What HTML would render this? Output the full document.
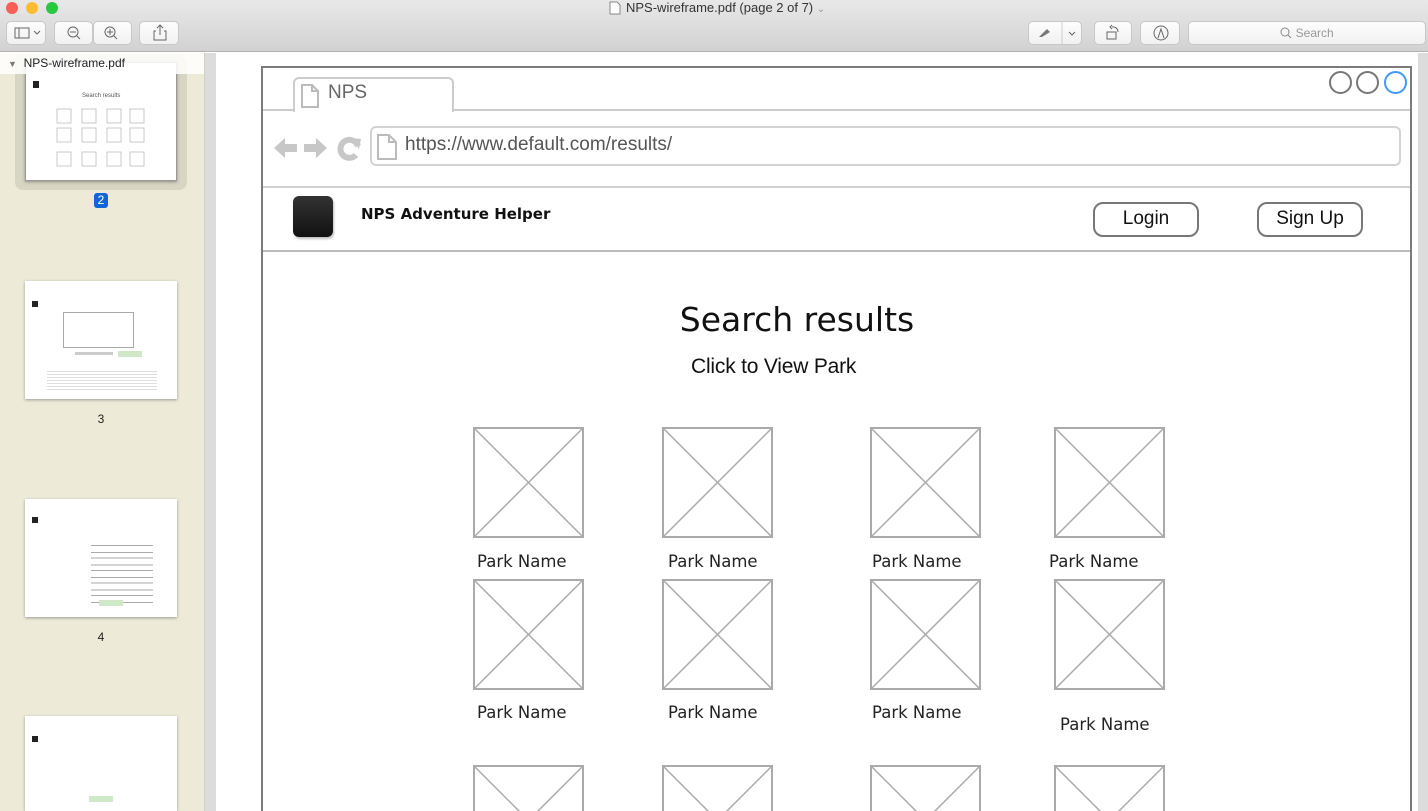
<!DOCTYPE html>
<html><head><meta charset="utf-8"><style>
*{margin:0;padding:0;box-sizing:border-box}
html,body{width:1428px;height:811px;overflow:hidden}
body{position:relative;font-family:"Liberation Sans",sans-serif;background:#fff}
#w{position:absolute;left:0;top:0;width:1428px;height:811px;overflow:hidden}
.a{position:absolute}
.btn{position:absolute;top:21px;height:24px;border:1px solid #c8c8c8;border-radius:5px;background:linear-gradient(#fdfdfd,#f1f1f1)}
.img{position:absolute;width:111px;height:111px}
.img.b{height:46px}
.lbl{position:absolute;font-family:"DejaVu Sans",sans-serif;font-size:16.5px;color:#222}
.th{position:absolute;left:25px;width:152px;background:#fff;box-shadow:0 1px 3px rgba(0,0,0,.35);overflow:hidden}
.num{position:absolute;font-size:12px;color:#222;width:20px;text-align:center;left:91px}
</style></head><body><div id="w">
<div class="a" style="left:0;top:0;width:1428px;height:52px;background:linear-gradient(#e9e8e9,#d3d2d3);border-bottom:1px solid #b3b3b3"></div>
<div class="a" style="left:6px;top:2px;width:12px;height:12px;border-radius:50%;background:#fc5f57"></div>
<div class="a" style="left:26px;top:2px;width:12px;height:12px;border-radius:50%;background:#fdbc2e"></div>
<div class="a" style="left:46px;top:2px;width:12px;height:12px;border-radius:50%;background:#28c840"></div>
<svg class="a" style="left:609px;top:1px" width="12" height="14"><path d="M1 1h7l3 3v9H1z" fill="#fff" stroke="#888"/></svg>
<div class="a" style="left:626px;top:0;font-size:13px;color:#333;line-height:15px">NPS-wireframe.pdf (page 2 of 7) <span style="color:#999;font-size:10px">⌄</span></div>
<div class="btn" style="left:6px;width:40px"><svg width="40" height="22"><rect x="8" y="6" width="14" height="10" fill="none" stroke="#666"/><line x1="12" y1="6" x2="12" y2="16" stroke="#666"/><path d="M27 9l3 3 3-3" fill="none" stroke="#666"/></svg></div>
<div class="btn" style="left:54px;width:39px"><svg width="39" height="22"><circle cx="18" cy="10" r="5" fill="none" stroke="#666"/><line x1="15" y1="10" x2="21" y2="10" stroke="#666"/><line x1="22" y1="14" x2="25" y2="17" stroke="#666"/></svg></div>
<div class="btn" style="left:93px;width:39px"><svg width="39" height="22"><circle cx="16" cy="10" r="5" fill="none" stroke="#666"/><line x1="13" y1="10" x2="19" y2="10" stroke="#666"/><line x1="16" y1="7" x2="16" y2="13" stroke="#666"/><line x1="20" y1="14" x2="23" y2="17" stroke="#666"/></svg></div>
<div class="btn" style="left:139px;width:40px"><svg width="40" height="22"><path d="M16 9h-2v9h12v-9h-2M20 13V3M17 6l3-3 3 3" fill="none" stroke="#666"/></svg></div>
<div class="btn" style="left:1028px;width:54px"><svg width="54" height="22"><path d="M8 17h14M10 15l8-8 3 3-8 5z" fill="#777"/><line x1="33" y1="0" x2="33" y2="22" stroke="#ccc"/><path d="M40 10l3 3 3-3" fill="none" stroke="#666"/></svg></div>
<div class="btn" style="left:1094px;width:38px"><svg width="38" height="22"><rect x="12" y="10" width="9" height="7" fill="none" stroke="#666"/><path d="M17 5a5 5 0 0 1 6 5M17 3l-2 2 2 2" fill="none" stroke="#666"/></svg></div>
<div class="btn" style="left:1140px;width:40px"><svg width="40" height="22"><circle cx="20" cy="11" r="7" fill="none" stroke="#666"/><path d="M17 16l3-9 3 9" fill="none" stroke="#666"/></svg></div>
<div class="btn" style="left:1188px;width:238px;color:#999;font-size:12px;text-align:center;line-height:22px"><svg width="12" height="12" style="vertical-align:-2px"><circle cx="5" cy="5" r="4" fill="none" stroke="#888"/><line x1="8" y1="8" x2="11" y2="11" stroke="#888"/></svg> Search</div>
<div class="a" style="left:0;top:53px;width:204px;height:758px;background:#edebd8"></div>
<div class="a" style="left:204px;top:53px;width:12px;height:758px;background:#dcdcdc;border-left:1px solid #cfcfcf"></div>
<div class="a" style="left:15px;top:55px;width:172px;height:135px;background:#d7d5c3;border-radius:8px"></div>
<div class="th" style="top:62px;height:119px;border:1px solid #999"><div class="a" style="left:7px;top:18px;width:6px;height:7px;background:#222"></div><div class="a" style="left:56px;top:30px;font-size:6px;color:#555">Search results</div>
<svg class="a" style="left:30px;top:45px" width="120" height="70"><g fill="none" stroke="#bbb" stroke-width=".8"><rect x="1" y="1" width="14" height="14"/><rect x="26" y="1" width="14" height="14"/><rect x="51" y="1" width="14" height="14"/><rect x="74" y="1" width="14" height="14"/><rect x="1" y="20" width="14" height="14"/><rect x="26" y="20" width="14" height="14"/><rect x="51" y="20" width="14" height="14"/><rect x="74" y="20" width="14" height="14"/><rect x="1" y="44" width="14" height="14"/><rect x="26" y="44" width="14" height="14"/><rect x="51" y="44" width="14" height="14"/><rect x="74" y="44" width="14" height="14"/></g></svg></div>
<div class="a" style="left:0;top:53px;width:204px;height:21px;background:rgba(255,255,255,.85);font-size:12px;color:#222;line-height:21px;padding-left:8px"><span style="color:#777;font-size:9px">▼</span>&nbsp;&nbsp;NPS-wireframe.pdf</div>
<div class="a" style="left:94px;top:193px;width:14px;height:15px;background:#1066d8;border-radius:3px;color:#fff;font-size:12px;text-align:center;line-height:15px">2</div>
<div class="th" style="top:281px;height:118px"><div class="a" style="left:7px;top:20px;width:6px;height:6px;background:#222"></div><div class="a" style="left:38px;top:31px;width:71px;height:36px;border:1px solid #aaa"></div><div class="a" style="left:93px;top:70px;width:24px;height:6px;background:#cfe9c8"></div><div class="a" style="left:50px;top:71px;width:38px;height:3px;background:#ccc"></div><div class="a" style="left:22px;top:90px;width:110px;height:20px;background:repeating-linear-gradient(#ddd 0 1px,#fff 1px 3px)"></div></div>
<div class="num" style="top:412px">3</div>
<div class="th" style="top:499px;height:118px"><div class="a" style="left:7px;top:18px;width:6px;height:6px;background:#222"></div><div class="a" style="left:66px;top:46px;width:62px;height:60px;background:repeating-linear-gradient(#aaa 0 1px,#fff 1px 7px,#aaa 7px 8px,#fff 8px 12.5px)"></div><div class="a" style="left:74px;top:101px;width:24px;height:6px;background:#cfe9c8"></div></div>
<div class="num" style="top:630px">4</div>
<div class="th" style="top:716px;height:95px"><div class="a" style="left:7px;top:20px;width:6px;height:6px;background:#222"></div><div class="a" style="left:64px;top:80px;width:24px;height:6px;background:#cfe9c8"></div></div>
<div class="a" style="left:1418px;top:53px;width:10px;height:758px;background:#dcdcdc"></div>
<div class="a" style="left:261px;top:66px;width:1151px;height:745px;border:2px solid #7b7b7b;border-bottom:none"></div>
<div class="a" style="left:293px;top:77px;width:161px;height:35px;border:2px solid #ccc;border-bottom:none;border-radius:6px 6px 0 0;background:#fff"></div>
<svg class="a" style="left:300px;top:83px" width="20" height="26"><path d="M2 2h10l6 6v16H2z M12 2v6h6" fill="none" stroke="#bbb" stroke-width="2"/></svg>
<div class="a" style="left:328px;top:82px;font-size:19px;color:#666">NPS</div>
<div class="a" style="left:263px;top:109px;width:31px;height:2px;background:#ccc"></div>
<div class="a" style="left:453px;top:109px;width:957px;height:2px;background:#ccc"></div>
<div class="a" style="left:1329px;top:71px;width:23px;height:23px;border:2px solid #777;border-radius:50%"></div>
<div class="a" style="left:1356px;top:71px;width:23px;height:23px;border:2px solid #777;border-radius:50%"></div>
<div class="a" style="left:1384px;top:71px;width:23px;height:23px;border:2px solid #3d9bff;border-radius:50%"></div>
<svg class="a" style="left:272px;top:134px" width="95" height="28"><path d="M2 14l11-10v6h12v8H13v6z" fill="#c7c7c7"/><path d="M32 10h12V4l11 10-11 10v-6H32z" fill="#c7c7c7"/><path d="M86 12a9 9 0 1 0-2 9" fill="none" stroke="#c7c7c7" stroke-width="6"/><path d="M79 4l10 1-2 10z" fill="#c7c7c7"/></svg>
<div class="a" style="left:370px;top:126px;width:1031px;height:40px;border:2px solid #d3d3d3;border-radius:6px"></div>
<svg class="a" style="left:376px;top:133px" width="22" height="28"><path d="M2 2h11l7 7v17H2z M13 2v7h7" fill="none" stroke="#bbb" stroke-width="2"/></svg>
<div class="a" style="left:405px;top:134px;font-size:19px;color:#555">https://www.default.com/results/</div>
<div class="a" style="left:263px;top:186px;width:1147px;height:2px;background:#d0d0d0"></div>
<div class="a" style="left:293px;top:196px;width:40px;height:41px;border-radius:6px;background:linear-gradient(#333,#111);box-shadow:1px 2px 2px rgba(0,0,0,.25)"></div>
<div class="a" style="left:361px;top:205px;font-family:'DejaVu Sans',sans-serif;font-weight:bold;font-size:15px;color:#111">NPS Adventure Helper</div>
<div class="a" style="left:1093px;top:202px;width:106px;height:35px;border:2px solid #777;border-radius:10px;text-align:center;font-size:19px;line-height:30px;color:#111">Login</div>
<div class="a" style="left:1257px;top:202px;width:106px;height:35px;border:2px solid #777;border-radius:10px;text-align:center;font-size:19px;line-height:30px;color:#111">Sign Up</div>
<div class="a" style="left:263px;top:250px;width:1147px;height:2px;background:#bbb"></div>
<div class="a" style="left:597px;top:300px;width:400px;text-align:center;font-family:'DejaVu Sans',sans-serif;font-size:33px;color:#111">Search results</div>
<div class="a" style="left:691px;top:355px;font-size:21px;color:#111;letter-spacing:-0.2px">Click to View Park</div>
<svg width="0" height="0" style="position:absolute"><defs><g id="x"><rect x="1" y="1" width="109" height="109" fill="#fff" stroke="#aaa" stroke-width="2"/><path d="M1 1L110 110M110 1L1 110" stroke="#aaa" stroke-width="1.5"/></g></defs></svg>
<svg class="img" style="left:473px;top:427px"><use href="#x"/></svg>
<svg class="img" style="left:662px;top:427px"><use href="#x"/></svg>
<svg class="img" style="left:870px;top:427px"><use href="#x"/></svg>
<svg class="img" style="left:1054px;top:427px"><use href="#x"/></svg>
<svg class="img" style="left:473px;top:579px"><use href="#x"/></svg>
<svg class="img" style="left:662px;top:579px"><use href="#x"/></svg>
<svg class="img" style="left:870px;top:579px"><use href="#x"/></svg>
<svg class="img" style="left:1054px;top:579px"><use href="#x"/></svg>
<svg class="img b" style="left:473px;top:765px"><use href="#x"/></svg>
<svg class="img b" style="left:662px;top:765px"><use href="#x"/></svg>
<svg class="img b" style="left:870px;top:765px"><use href="#x"/></svg>
<svg class="img b" style="left:1054px;top:765px"><use href="#x"/></svg>
<div class="lbl" style="left:477px;top:552px">Park Name</div>
<div class="lbl" style="left:668px;top:552px">Park Name</div>
<div class="lbl" style="left:872px;top:552px">Park Name</div>
<div class="lbl" style="left:1049px;top:552px">Park Name</div>
<div class="lbl" style="left:477px;top:703px">Park Name</div>
<div class="lbl" style="left:668px;top:703px">Park Name</div>
<div class="lbl" style="left:872px;top:703px">Park Name</div>
<div class="lbl" style="left:1060px;top:715px">Park Name</div>
</div></body></html>
